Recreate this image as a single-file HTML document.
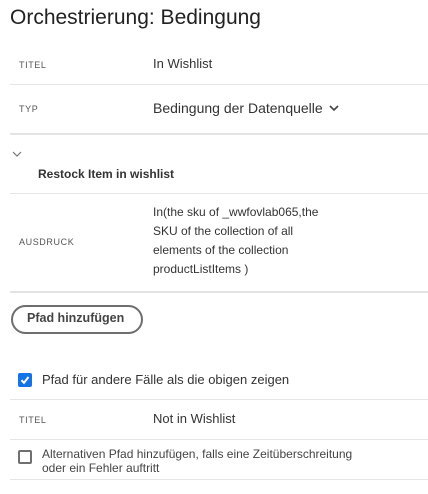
<!DOCTYPE html>
<html><head><meta charset="utf-8"><style>
body{margin:0;width:428px;height:494px;background:#fff;font-family:"Liberation Sans",sans-serif;color:#2c2c2c;position:relative;overflow:hidden}
.a{position:absolute;white-space:nowrap}
.l{position:absolute;left:10px;right:0;height:1px;background:#e6e6e6}
.lab{font-size:9px;letter-spacing:.6px;color:#555}
.v{font-size:13px;color:#333}
</style></head><body>
<div class="a" style="left:10px;top:6px;font-size:21px;color:#222">Orchestrierung: Bedingung</div>
<div class="a lab" style="left:19px;top:60px">TITEL</div>
<div class="a v" style="left:153px;top:56px">In Wishlist</div>
<div class="l" style="top:84px"></div>
<div class="a lab" style="left:19px;top:104px">TYP</div>
<div class="a v" style="left:153px;top:100px;font-size:14px">Bedingung der Datenquelle</div>
<svg class="a" style="left:328px;top:103px" width="12" height="10"><path d="M2 3 L6 7 L10 3" fill="none" stroke="#444" stroke-width="1.6"/></svg>
<div class="l" style="top:133px;height:2px;background:#e3e3e3"></div>
<svg class="a" style="left:12px;top:150px" width="10" height="8"><path d="M1 2 L5 6 L9 2" fill="none" stroke="#777" stroke-width="1.2"/></svg>
<div class="a" style="left:38px;top:167px;font-size:12px;font-weight:bold;color:#333">Restock Item in wishlist</div>
<div class="l" style="top:193px"></div>
<div class="a lab" style="left:19px;top:237px">AUSDRUCK</div>
<div class="a" style="left:153px;top:203px;font-size:12px;line-height:19px;color:#333">In(the sku of _wwfovlab065,the<br>SKU of the collection of all<br>elements of the collection<br>productListItems )</div>
<div class="l" style="top:291px;height:2px;background:#e3e3e3"></div>
<div class="a" style="left:11px;top:305px;width:132px;height:29px;border:2px solid #6e6e6e;border-radius:16px;box-sizing:border-box"></div>
<div class="a" style="left:27px;top:311px;font-size:12.5px;font-weight:bold;color:#444">Pfad hinzufügen</div>
<div class="a" style="left:18px;top:373px;width:14px;height:14px;background:#1473e6;border-radius:2px"></div>
<svg class="a" style="left:18px;top:373px" width="14" height="14"><path d="M3.5 7.2 L6 9.8 L10.5 4" fill="none" stroke="#fff" stroke-width="2"/></svg>
<div class="a v" style="left:42px;top:372px">Pfad für andere Fälle als die obigen zeigen</div>
<div class="l" style="top:399px"></div>
<div class="a lab" style="left:19px;top:415px">TITEL</div>
<div class="a v" style="left:153px;top:411px">Not in Wishlist</div>
<div class="l" style="top:439px"></div>
<div class="a" style="left:18px;top:450px;width:14px;height:14px;border:2px solid #707070;border-radius:2px;box-sizing:border-box"></div>
<div class="a" style="left:42px;top:447px;font-size:12px;line-height:14px;color:#444">Alternativen Pfad hinzufügen, falls eine Zeitüberschreitung<br>oder ein Fehler auftritt</div>
<div class="l" style="top:479px"></div>
</body></html>
